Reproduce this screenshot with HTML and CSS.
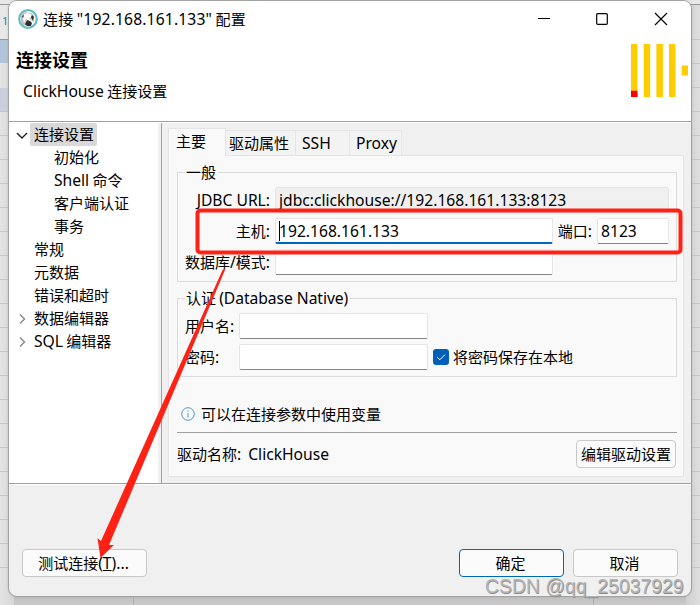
FILE: index.html
```html
<!DOCTYPE html>
<html lang="zh">
<head>
<meta charset="utf-8">
<title>连接配置</title>
<link rel="stylesheet" href="styles.css">
</head>
<body>
<div class="desktop">
  <span class="behind">12</span>
  <svg class="scene" viewBox="0 0 700 605">
    <defs>
      <linearGradient id="lg"><stop offset="0" stop-color="#e4e4e5"/><stop offset="1" stop-color="#cfcfd0"/></linearGradient>
      <linearGradient id="rg"><stop offset="0" stop-color="#cbcbcb"/><stop offset="1" stop-color="#dedede"/></linearGradient>
      <linearGradient id="bg" x2="0" y2="1"><stop offset="0" stop-color="#b6b6b6"/><stop offset="1" stop-color="#cacaca"/></linearGradient>
      <pattern id="rows" y="15" width="700" height="24" patternUnits="userSpaceOnUse"><path d="M0 .5H700" stroke="#c6c6c7"/></pattern>
    </defs>
    <path fill="url(#lg)" d="M0 39H20V605H0z"/>
    <path fill="url(#rg)" d="M680 5H700V605H680z"/>
    <path fill="url(#bg)" d="M14 588H686V605H14z"/>
    <path fill="#b0c4dc" d="M0 40H10V63H0z"/><path fill="#c9cfdc" d="M0 88H10V111H0z"/>
    <path fill="#e8e8e8" d="M0 0H700V4H0z"/>
    <path d="M0 4.500H700M0 39.500H10" stroke="#98989c"/>
    <path fill="url(#rows)" d="M0 111H10V590H0zM690 39H700V590H690z"/>
    <path d="M133.500 590V605M593.500 590V605" stroke="#b0b0b0"/>
  </svg>
  <main class="window">
    <header class="titlebar">
      <svg class="app" viewBox="0 0 20 20"><circle cx="10" cy="10" r="8.800" fill="#fff" stroke="#62bcc4" stroke-width="2.200"/><path d="M3 7 5 4 8 3 10 4 14 4 16 7 15 9 16 13 13 11 11 9 9 10 7 14 9 17 5 16 3 13z" fill="#c4bdb8"/><path d="M6 5 10 4 14 6 12 9 8 10 6 14 5 10z" fill="#fff"/><path d="M7 15 9 11 12 12 14 14 13 17 9 17zM14 6 16 8 15 12 13 8zM4 7 6 6 5 9z" fill="#302d2c"/></svg>
      <h1>连接 <span class="en">"192.168.161.133"</span> 配置</h1>
      <svg class="controls" viewBox="0 0 130 14"><path d="M0 6.500H12M117 1 129 13M129 1 117 13" /><rect x="58.700" y="1.700" width="10.600" height="10.600" rx="1"/></svg>
    </header>
    <section class="intro">
      <div><h2>连接设置</h2><p><span class="en">ClickHouse</span> 连接设置</p></div>
      <svg class="logo" viewBox="0 0 57 53"><path fill="#fc0" d="M0 0H6.500V53H0zM12.700 0H19.200V53H12.700zM25.400 0H31.900V53H25.400zM38 0H44.500V53H38zM50.700 21.600H57V31.500H50.700z"/><path fill="#f00" d="M0 46.700H6.500V53H0z"/></svg>
    </section>
    <section class="content">
      <nav class="tree">
        <div class="node"><svg viewBox="0 0 12 12"><path d="M1 3 6 8 11 3" stroke="#222"/></svg><b>连接设置</b></div>
        <div class="node child">初始化</div>
        <div class="node child"><span class="en">Shell</span>&nbsp;命令</div>
        <div class="node child">客户端认证</div>
        <div class="node child">事务</div>
        <div class="node"><i></i>常规</div>
        <div class="node"><i></i>元数据</div>
        <div class="node"><i></i>错误和超时</div>
        <div class="node"><svg viewBox="0 0 12 12"><path d="M4 1.500 8.500 6 4 10.500" stroke="#888"/></svg>数据编辑器</div>
        <div class="node"><svg viewBox="0 0 12 12"><path d="M4 1.500 8.500 6 4 10.500" stroke="#888"/></svg><span class="en">SQL</span>&nbsp;编辑器</div>
      </nav>
      <div class="settings">
        <div class="tabs"><span class="tab active">主要</span><span class="tab t2">驱动属性</span><span class="tab t3 en">SSH</span><span class="tab t4 en">Proxy</span></div>
        <div class="panel">
          <fieldset class="general">
            <legend>一般</legend>
            <div class="grid">
              <label class="en">JDBC URL:</label><div class="field url en">jdbc:clickhouse://192.168.161.133:8123</div>
              <label>主机<span class="en">:</span></label><div class="field host en"><span class="caret"></span>192.168.161.133</div><label class="portlabel">端口<span class="en">:</span></label><div class="field port en">8123</div>
              <label>数据库<span class="en">/</span>模式<span class="en">:</span></label><div class="field db"></div>
            </div>
          </fieldset>
          <fieldset class="auth">
            <legend>认证 <span class="en">(Database Native)</span></legend>
            <div class="row"><label>用户名<span class="en">:</span></label><div class="field"></div></div>
            <div class="row"><label>密码<span class="en">:</span></label><div class="field"></div><svg class="check" viewBox="0 0 16 16"><rect width="16" height="16" rx="3" fill="#005fb8"/><path d="M4.200 8.300 6.800 10.800 11.800 5.700" fill="none" stroke="#fff"/></svg><span>将密码保存在本地</span></div>
          </fieldset>
          <div class="hint"><svg viewBox="0 0 14 14"><circle cx="7" cy="7" r="6.300"/><path d="M7 6V10.500M7 3.500V4.800"/></svg>可以在连接参数中使用变量</div>
          <div class="driver"><span>驱动名称<span class="en">:</span></span><span class="en name">ClickHouse</span><button>编辑驱动设置</button></div>
        </div>
      </div>
    </section>
    <footer><button class="test">测试连接<span class="en">(<u>T</u>)...</span></button><button class="ok">确定</button><button class="cancel">取消</button></footer>
  </main>
  <svg class="marks" viewBox="0 0 700 605"><rect x="197.500" y="210.500" width="483" height="42" rx="3"/><path d="M223 269 225 270 109 545 114 545 100.500 558 97.500 538 101 541z"/></svg>
  <span class="watermark">CSDN @qq_25037929</span>
</div>
</body>
</html>
```
FILE: styles.css
```css
*{box-sizing:border-box}
body{margin:0;width:700px;height:605px;overflow:hidden;background:#e8e8e8;color:#000;font:15px/22px "Noto Sans CJK SC",sans-serif}
.en{font-family:"Noto Sans",sans-serif;font-size:15.65px}
h1,h2,p{margin:0;font-weight:400;font-size:15px}
.desktop{position:relative;width:700px;height:605px;padding:0 8px 8px}
.scene,.marks{position:absolute;left:0;top:0;width:700px;height:605px}
.behind{position:absolute;left:2px;top:10px;color:#1585c0;font:11px/22px "Noto Sans",sans-serif;z-index:1}
.window{position:relative;z-index:2;width:684px;height:597px;border:1px solid #a2a2a2;border-radius:9px;background:#f0f0f0;display:flex;flex-direction:column;overflow:hidden;box-shadow:0 0 2px #8886}
.titlebar{height:38px;background:#fff;display:flex;align-items:center;padding:0 23px 2px 9px;flex:none}
.app{width:20px;height:20px}
h1{margin-left:5px;white-space:pre;letter-spacing:.15px}
.controls{width:130px;height:14px;margin-left:auto;fill:none;stroke:#000;stroke-width:1.2}
.intro{height:83px;flex:none;background:#fff;border-bottom:1px solid #a0a0a0;display:flex;justify-content:space-between;padding:4px 3px 0 7px}
h2{font-size:18px;font-weight:700;line-height:32px;margin-bottom:5px}
.intro p{padding-left:7px}
.logo{width:57px;height:53px;margin-top:.5px}
.content{height:362px;flex:none;display:flex;border-bottom:1px solid #a0a0a0;border-top:1px solid #fff}
.tree{width:149px;background:#fff}
.node{height:23px;display:flex;align-items:center;white-space:nowrap;line-height:20px;padding-bottom:2px}
.node svg,.node i{width:12px;height:12px;margin:2px 7px 0 6px;flex:none;fill:none;stroke-width:1.4}
.node svg{position:relative;left:1px}
.node:first-child{padding-bottom:0}
.node svg+b{font-weight:400;background:#d9d9d9;padding:0 3px 2px 4px;margin-left:-4px;line-height:21px;border-radius:2px}
.child{padding-left:45px}
.settings{margin-left:3px;border-left:1px solid #a0a0a0;flex:1;padding:5px 7px 6px 6px}
.tabs{display:flex;align-items:flex-end;height:28px;box-shadow:inset 0 -1px #e5e5e5}
.tab{height:26px;border:1px solid #e5e5e5;border-left:0;background:#f3f3f3;line-height:24px;padding-left:4px}
.active{width:58px;height:28px;background:#f9f9f9;border-left:1px solid #e5e5e5;border-bottom:0;padding-left:7px}
.t2{width:70px;padding-left:3px}.t3{width:54px;padding-left:6px;line-height:25px}.t4{width:52px;padding-left:6px;line-height:25px}
.panel{height:321px;background:#f9f9f9;border:1px solid #e5e5e5;border-top:0;padding:5px 6px 0 8px}
fieldset{margin:0;border:1px solid #dcdcdc;padding:0;min-width:0}
legend{margin-left:7px;padding:0 2px 0 1px;height:22px}
.auth legend{letter-spacing:-.05px}
.general{height:121px}
.grid{display:grid;grid-template-columns:92px 278px 45px 72px;row-gap:5px;grid-template-rows:repeat(3,26px);margin-top:4px}
.grid label{text-align:right;line-height:25px;white-space:nowrap}
.grid label.en{line-height:26px}
.grid .portlabel{position:relative;left:-1px}
.field{height:26px;background:#fff;border:1px solid #e5e5e5;border-bottom-color:#858585;border-radius:2px;padding-left:3px;line-height:25px}
.grid .field{margin-left:5px;width:278px}
.grid .url{grid-column:2/5;width:394px;background:#f0f0f0;border-bottom-color:#e5e5e5;line-height:25px}
.grid .host{border-bottom:2px solid #0067c0;position:relative;height:26px}
.caret{position:absolute;left:3px;top:2px;width:1px;height:20px;background:#000}
.grid .port{margin-left:4px;width:72px}
.auth{height:90px;margin-top:5px}
.auth .row{display:flex;align-items:center;height:26px;margin:4px 0 5px 7px}
.auth .row+.row{margin-top:0}
.row label{width:54px}.row .field{width:189px}
.check{width:16px;height:16px;margin:0 4px 0 5px}
.hint{height:56px;border-bottom:1px solid #a0a0a0;display:flex;align-items:flex-end;padding-bottom:7px}
.hint svg{width:14px;height:14px;margin:0 6px 4px 4px;fill:none;stroke:#4a99ce}
.driver{height:42px;display:flex;align-items:center}
.name{margin-left:7px}
button{height:28px;font:15px/24px "Noto Sans CJK SC",sans-serif;color:#000;background:#fbfbfb;border:1px solid #c8c8c8;border-radius:4px;padding:0}
.driver button{width:100px;margin-left:auto;margin-right:1px}
footer{display:flex;flex:1;border-top:1px solid #fff;padding:64px 13px 0 13px}
footer button{padding-right:2px}
.test{width:125px}.ok{width:105px;margin-left:auto;border-color:#0067c0}.cancel{width:105px;margin-left:9px}
.marks{z-index:3;fill:none}
.marks rect{stroke:#ff2114;stroke-width:4}
.marks path{fill:#ff2114}
.watermark{position:absolute;z-index:4;left:485px;top:574px;font:19.4px/24px "Liberation Sans",sans-serif;color:#b4b4b4;text-shadow:.6px .6px #8c8c8c;white-space:nowrap}
```
